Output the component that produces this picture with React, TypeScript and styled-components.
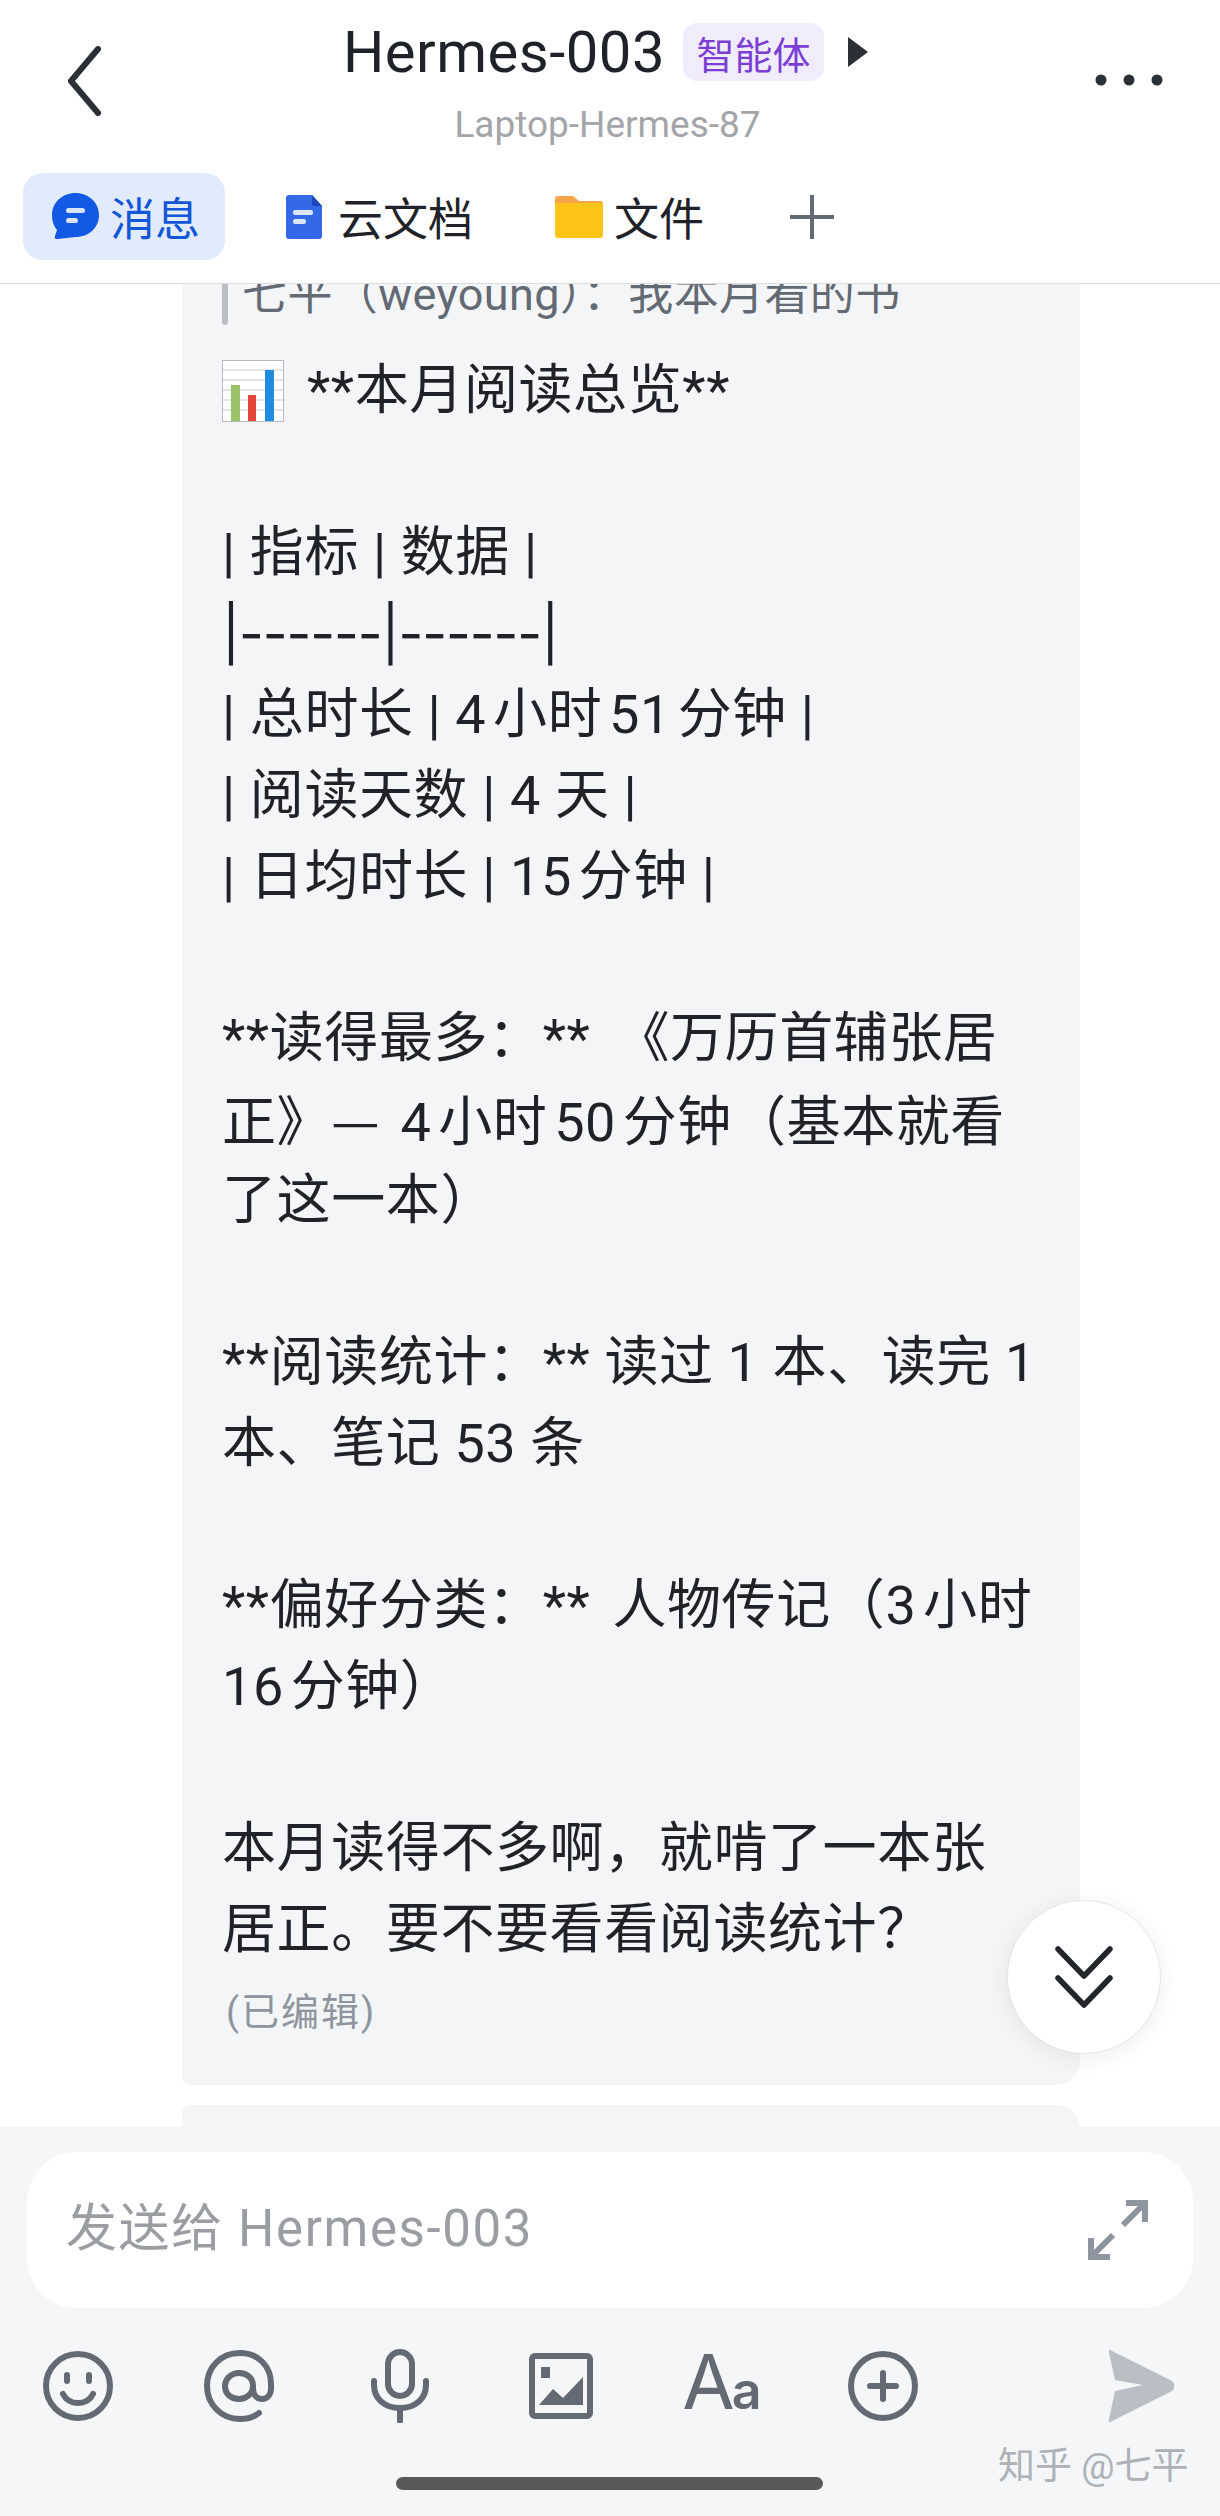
import React from 'react';
import styled, { createGlobalStyle } from 'styled-components';

const GlobalStyle = createGlobalStyle`
    html, body {
        margin: 0;
        padding: 0;
        background: #fff;
    }
    body {
        font-family: "Roboto", "Noto Sans CJK SC", sans-serif;
    }
`;

const Page = styled.div`
    position: relative;
    display: flex;
    flex-direction: column;
    width: 1220px;
    height: 2516px;
    overflow: hidden;
    background: #fff;
`;

const TopBar = styled.header`
    display: flex;
    flex-direction: column;
    height: 283px;
    flex: none;
    border-bottom: 1px solid #dcdee0;
    background: #fff;
`;

const TitleRow = styled.div`
    display: flex;
    align-items: flex-start;
    height: 173px;
    padding: 23px 57px 0 66px;
    box-sizing: border-box;
`;

const TitleBlock = styled.div`
    flex: 1;
    display: flex;
    flex-direction: column;
    align-items: center;
`;

const TitleLine = styled.div`
    display: flex;
    align-items: center;
    height: 58px;
    margin-left: 14px;
`;

const Title = styled.span`
    font-size: 58px;
    line-height: 60px;
    color: #1f2329;
    letter-spacing: 0.5px;
`;

const AgentBadge = styled.span`
    display: flex;
    align-items: center;
    justify-content: center;
    width: 141px;
    height: 58px;
    margin-left: 18px;
    border-radius: 14px;
    background: #f1ecfc;
    color: #7b3fd6;
    font-size: 38px;
`;

const SubTitle = styled.div`
    margin: 16px 0 0 18px;
    font-size: 37px;
    line-height: 56px;
    color: #a3a5a8;
`;

const Tabs = styled.nav`
    display: flex;
    align-items: center;
    height: 87px;
    padding-left: 23px;
`;

const Tab = styled.div<{ $active?: boolean; $gap: number; $offset?: number }>`
    display: flex;
    align-items: center;
    gap: ${(p) => p.$gap}px;
    height: 87px;
    margin-left: ${(p) => p.$offset ?? 0}px;
    padding: ${(p) => (p.$active ? '0 25px 0 29px' : '0')};
    border-radius: 20px;
    background: ${(p) => (p.$active ? '#e1ebfb' : 'transparent')};
    color: ${(p) => (p.$active ? '#1456d8' : '#1f2329')};
    font-size: 45px;
`;

const Chat = styled.main`
    flex: 1;
    min-height: 0;
    overflow: hidden;
    padding-left: 182px;
`;

const Bubble = styled.section`
    width: 898px;
    height: 1841px;
    margin-top: -40px;
    padding: 21px 0 0 40px;
    box-sizing: border-box;
    background: #f3f5f7;
    border-radius: 8px 24px 24px 8px;
`;

const NextBubble = styled.div`
    width: 898px;
    height: 60px;
    margin-top: 20px;
    background: #f3f5f7;
    border-radius: 8px 24px 24px 8px;
`;

const Quote = styled.div`
    display: flex;
    align-items: center;
    gap: 14px;
    height: 60px;
    margin-bottom: 25px;
    font-size: 45px;
    line-height: 60px;
    letter-spacing: 0.4px;
    color: #646a73;
    &::before {
        content: '';
        width: 6px;
        height: 60px;
        border-radius: 3px;
        background: #bbbfc4;
    }
`;

const Line = styled.div<{ $wordGap?: number }>`
    display: flex;
    align-items: center;
    gap: 23px;
    height: 81px;
    font-size: 54px;
    line-height: 81px;
    color: #1f2329;
    white-space: pre;
    letter-spacing: 0.6px;
    word-spacing: ${(p) => p.$wordGap ?? 0}px;
    text-autospace: normal;
`;

const DashLine = styled(Line)`
    font-family: "Inter", sans-serif;
    letter-spacing: -1.06px;
`;

const WideDash = styled.span`
    font-family: "Noto Sans CJK SC", sans-serif;
    letter-spacing: 7px;
`;

const Edited = styled.div`
    margin-top: 17px;
    padding-left: 4px;
    font-size: 38px;
    line-height: 50px;
    letter-spacing: 2px;
    color: #8f959e;
`;

const ScrollButton = styled.button`
    position: absolute;
    left: 1007px;
    top: 1900px;
    display: flex;
    align-items: center;
    justify-content: center;
    width: 154px;
    height: 154px;
    padding: 0;
    border: 1px solid #e4e6e8;
    border-radius: 50%;
    background: #fff;
    box-shadow: 0 4px 22px rgba(0, 0, 0, 0.07);
`;

const Footer = styled.footer`
    flex: none;
    display: flex;
    flex-direction: column;
    height: 389px;
    padding: 25px 27px 0;
    box-sizing: border-box;
    background: #f4f6f8;
`;

const InputBox = styled.div`
    display: flex;
    align-items: center;
    justify-content: space-between;
    height: 156px;
    padding: 0 45px 0 39px;
    border-radius: 50px;
    background: #fff;
`;

const Placeholder = styled.span`
    margin-top: -12px;
    font-size: 51px;
    letter-spacing: 1.6px;
    color: #9a9da1;
`;

const Tools = styled.div`
    display: flex;
    align-items: center;
    gap: 91px;
    height: 72px;
    margin-top: 42px;
    padding: 0 17px 0 16px;
`;

const ToolSlot = styled.div<{ $push?: boolean }>`
    display: flex;
    align-items: center;
    justify-content: center;
    width: 70px;
    height: 72px;
    flex: none;
    margin-left: ${(p) => (p.$push ? 'auto' : '0')};
`;

const FontIcon = styled.span`
    display: flex;
    align-items: baseline;
    color: #646a73;
    font-family: "Inter", sans-serif;
    line-height: 72px;
    white-space: nowrap;
    b {
        font-size: 76px;
        font-weight: 400;
        letter-spacing: -3px;
    }
    i {
        font-size: 52px;
        font-weight: 600;
        font-style: normal;
    }
`;

const Watermark = styled.div`
    position: absolute;
    left: 998px;
    top: 2444px;
    font-size: 37px;
    line-height: 46px;
    color: #aeb2b6;
    white-space: nowrap;
`;

const HomeBar = styled.div`
    width: 427px;
    height: 13px;
    margin: 55px auto 0 369px;
    border-radius: 7px;
    background: #58595b;
`;

const BackIcon = () => (
    <svg width="36" height="70" viewBox="0 0 36 70" style={{ marginTop: 23 }} fill="none">
        <path d="M32 3 L5 35 L32 67" stroke="#2b2f36" strokeWidth="6" strokeLinecap="round" strokeLinejoin="round" />
    </svg>
);

const MoreIcon = () => (
    <svg width="68" height="12" viewBox="0 0 68 12" style={{ marginTop: 51 }} fill="#2b2f36">
        <circle cx="6" cy="6" r="5.5" />
        <circle cx="34" cy="6" r="5.5" />
        <circle cx="62" cy="6" r="5.5" />
    </svg>
);

const Arrow = () => (
    <svg width="20" height="30" viewBox="0 0 20 30" style={{ marginLeft: 24 }}>
        <path d="M0 0 L20 15 L0 30 Z" fill="#2b2f36" />
    </svg>
);

const MessageIcon = () => (
    <svg width="47" height="47" viewBox="0 0 47 47">
        <path d="M23.5 0 C36.5 0 47 9.5 47 22 C47 35 36.5 44 23.5 44 L6 46 C3 46.5 2 45 3 43 L5 37 C1.5 33 0 28 0 22 C0 9.5 10.5 0 23.5 0 Z" fill="#1259e4" />
        <rect x="14" y="15" width="19" height="5" rx="2.5" fill="#d7e4fb" />
        <rect x="14" y="25" width="12" height="5" rx="2.5" fill="#d7e4fb" />
    </svg>
);

const DocIcon = () => (
    <svg width="36" height="44" viewBox="0 0 36 44">
        <path d="M3 0 H26 L36 11 V41 C36 43 35 44 33 44 H3 C1 44 0 43 0 41 V3 C0 1 1 0 3 0 Z" fill="#3369e7" />
        <path d="M26 0 L36 11 H28 C27 11 26 10 26 9 Z" fill="#1d47b5" />
        <rect x="7" y="15" width="20" height="5" rx="2" fill="#dbe6fb" />
        <rect x="7" y="24" width="13" height="5" rx="2" fill="#dbe6fb" />
    </svg>
);

const FolderIcon = () => (
    <svg width="48" height="42" viewBox="0 0 48 42">
        <path d="M3 0 H18 L24 5 H45 C47 5 48 6 48 8 V14 H0 V3 C0 1 1 0 3 0 Z" fill="#f6a54a" />
        <path d="M0 7 H48 V39 C48 41 47 42 45 42 H3 C1 42 0 41 0 39 Z" fill="#fcc418" />
    </svg>
);

const PlusIcon = () => (
    <svg width="44" height="44" viewBox="0 0 44 44" fill="none">
        <path d="M22 0 V44 M0 22 H44" stroke="#646a73" strokeWidth="4" />
    </svg>
);

const ChartEmoji = () => (
    <svg width="62" height="62" viewBox="0 0 62 62">
        <rect x="0.5" y="0.5" width="61" height="61" fill="#fff" stroke="#b5bac0" />
        <path d="M1 10 H61 M1 20 H61 M1 30 H61 M1 40 H61 M1 50 H61" stroke="#c6cace" strokeWidth="1" />
        <rect x="9" y="25" width="9" height="36" fill="#9ac267" />
        <rect x="26" y="35" width="8" height="26" fill="#e2453c" />
        <rect x="43" y="10" width="9" height="51" fill="#1f8ce0" />
    </svg>
);

const ChevronsDown = () => (
    <svg width="58" height="62" viewBox="0 0 58 62" fill="none">
        <path d="M3 3 L29 30 L55 3 M3 32 L29 59 L55 32" stroke="#22262b" strokeWidth="5.5" strokeLinecap="round" strokeLinejoin="round" />
    </svg>
);

const ExpandIcon = () => (
    <svg width="60" height="60" viewBox="0 0 60 60" fill="none" stroke="#8f959e" strokeWidth="6">
        <path d="M38 3 H57 V22 M56 4 L35 25 M3 38 V57 H22 M4 56 L25 35" />
    </svg>
);

const toolStroke = {
    fill: 'none',
    stroke: '#646a73',
    strokeWidth: 6,
    strokeLinecap: 'round' as const,
};

const SmileIcon = () => (
    <svg width="70" height="72" viewBox="0 0 70 72" {...toolStroke}>
        <circle cx="35" cy="36" r="32" />
        <path d="M24 25 V31 M46 25 V31" />
        <path d="M20 44 C26 56 44 56 50 44" />
    </svg>
);

const AtIcon = () => (
    <svg width="70" height="72" viewBox="0 0 70 72" {...toolStroke}>
        <path d="M55 63 C50 67 43 69 36 69 C17 69 3 54 3 36 C3 17 17 3 36 3 C54 3 67 16 67 34 V38 C67 45 63 49 58 49 C53 49 49 45 49 38 V36 C49 28 43 23 35 23 C27 23 21 29 21 36 C21 44 27 49 35 49 C42 49 49 44 49 36" />
    </svg>
);

const MicIcon = () => (
    <svg width="58" height="74" viewBox="0 0 58 74" {...toolStroke}>
        <rect x="17" y="3" width="24" height="44" rx="12" />
        <path d="M3 32 V36 C3 50 14 59 29 59 C44 59 55 50 55 36 V32 M29 59 V72" />
    </svg>
);

const ImageIcon = () => (
    <svg width="64" height="66" viewBox="0 0 64 66">
        <rect x="3" y="3" width="58" height="60" rx="3" fill="none" stroke="#646a73" strokeWidth="6" />
        <rect x="12" y="14" width="9" height="11" fill="#646a73" />
        <path d="M10 52 L24 36 L34 45 L54 24 V52 Z" fill="#646a73" />
    </svg>
);

const AddIcon = () => (
    <svg width="70" height="72" viewBox="0 0 70 72" {...toolStroke}>
        <circle cx="35" cy="36" r="32" />
        <path d="M35 23 V49 M22 36 H48" strokeWidth="6" />
    </svg>
);

const SendIcon = () => (
    <svg width="68" height="72" viewBox="0 0 68 72">
        <path d="M2 3 C1 0 3 -1 5 1 L65 31 C68 33 68 39 65 41 L5 71 C3 73 1 72 2 69 L8 41 L36 35 L8 30 Z" fill="#babfc5" />
    </svg>
);

const tableLines = ['| 总时长 | 4小时51分钟 |', '| 阅读天数 | 4 天 |', '| 日均时长 | 15分钟 |'];

export default function App() {
    return (
        <Page>
            <GlobalStyle />
            <TopBar>
                <TitleRow>
                    <BackIcon />
                    <TitleBlock>
                        <TitleLine>
                            <Title>Hermes-003</Title>
                            <AgentBadge>智能体</AgentBadge>
                            <Arrow />
                        </TitleLine>
                        <SubTitle>Laptop-Hermes-87</SubTitle>
                    </TitleBlock>
                    <MoreIcon />
                </TitleRow>
                <Tabs>
                    <Tab $active $gap={11}>
                        <MessageIcon />
                        消息
                    </Tab>
                    <Tab $gap={16} $offset={61}>
                        <DocIcon />
                        云文档
                    </Tab>
                    <Tab $gap={11} $offset={82}>
                        <FolderIcon />
                        文件
                    </Tab>
                    <Tab $gap={0} $offset={86}>
                        <PlusIcon />
                    </Tab>
                </Tabs>
            </TopBar>
            <Chat>
                <Bubble>
                    <Quote>七平（weyoung）：我本月看的书</Quote>
                    <Line>
                        <ChartEmoji />
                        **本月阅读总览**
                    </Line>
                    <Line />
                    <Line>| 指标 | 数据 |</Line>
                    <DashLine>|------|------|</DashLine>
                    {tableLines.map((text) => (
                        <Line key={text}>{text}</Line>
                    ))}
                    <Line />
                    <Line $wordGap={11}>**读得最多：** 《万历首辅张居</Line>
                    <Line>
                        <span>
                            正》<WideDash>—</WideDash> 4小时50分钟（基本就看
                        </span>
                    </Line>
                    <Line>了这一本）</Line>
                    <Line />
                    <Line>**阅读统计：** 读过 1 本、读完 1</Line>
                    <Line>本、笔记 53 条</Line>
                    <Line />
                    <Line $wordGap={8}>**偏好分类：** 人物传记（3小时</Line>
                    <Line>16分钟）</Line>
                    <Line />
                    <Line>本月读得不多啊，就啃了一本张</Line>
                    <Line>居正。要不要看看阅读统计？</Line>
                    <Edited>(已编辑)</Edited>
                </Bubble>
                <NextBubble />
            </Chat>
            <ScrollButton>
                <ChevronsDown />
            </ScrollButton>
            <Footer>
                <InputBox>
                    <Placeholder>发送给 Hermes-003</Placeholder>
                    <ExpandIcon />
                </InputBox>
                <Tools>
                    <ToolSlot><SmileIcon /></ToolSlot>
                    <ToolSlot><AtIcon /></ToolSlot>
                    <ToolSlot><MicIcon /></ToolSlot>
                    <ToolSlot><ImageIcon /></ToolSlot>
                    <ToolSlot>
                        <FontIcon><b>A</b><i>a</i></FontIcon>
                    </ToolSlot>
                    <ToolSlot><AddIcon /></ToolSlot>
                    <ToolSlot $push><SendIcon /></ToolSlot>
                </Tools>
                <HomeBar />
            </Footer>
            <Watermark>知乎 @七平</Watermark>
        </Page>
    );
}
